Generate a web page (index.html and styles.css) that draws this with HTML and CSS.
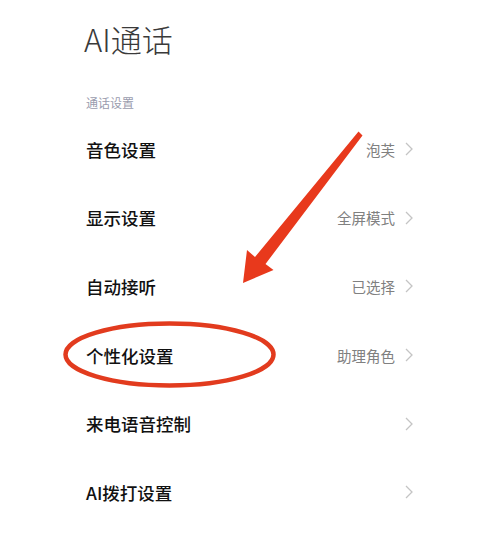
FILE: index.html
```html
<!DOCTYPE html>
<html lang="zh">
<head>
<meta charset="utf-8">
<link rel="stylesheet" href="styles.css">
</head>
<body>
<div class="page">
  <h1 class="title">AI通话</h1>
  <div class="section">通话设置</div>
  <ul class="list">
    <li class="row"><span class="label">音色设置</span><span class="value">泡芙</span><span class="chev"><svg width="8" height="14" viewBox="0 0 8 14"><path d="M1 1 L7 7 L1 13" fill="none" stroke="#c4c4c4" stroke-width="1.3"/></svg></span></li>
    <li class="row"><span class="label">显示设置</span><span class="value">全屏模式</span><span class="chev"><svg width="8" height="14" viewBox="0 0 8 14"><path d="M1 1 L7 7 L1 13" fill="none" stroke="#c4c4c4" stroke-width="1.3"/></svg></span></li>
    <li class="row"><span class="label">自动接听</span><span class="value">已选择</span><span class="chev"><svg width="8" height="14" viewBox="0 0 8 14"><path d="M1 1 L7 7 L1 13" fill="none" stroke="#c4c4c4" stroke-width="1.3"/></svg></span></li>
    <li class="row"><span class="label">个性化设置</span><span class="value">助理角色</span><span class="chev"><svg width="8" height="14" viewBox="0 0 8 14"><path d="M1 1 L7 7 L1 13" fill="none" stroke="#c4c4c4" stroke-width="1.3"/></svg></span></li>
    <li class="row"><span class="label">来电语音控制</span><span class="value"></span><span class="chev"><svg width="8" height="14" viewBox="0 0 8 14"><path d="M1 1 L7 7 L1 13" fill="none" stroke="#c4c4c4" stroke-width="1.3"/></svg></span></li>
    <li class="row"><span class="label">AI拨打设置</span><span class="value"></span><span class="chev"><svg width="8" height="14" viewBox="0 0 8 14"><path d="M1 1 L7 7 L1 13" fill="none" stroke="#c4c4c4" stroke-width="1.3"/></svg></span></li>
  </ul>
  <svg class="annot" width="500" height="533" viewBox="0 0 500 533">
    <polygon points="358.5,131.5 362.5,135.5 265.5,264 273.5,270 243,283 247,250 255,257" fill="#e8391c"/>
    <ellipse cx="169.5" cy="354.5" rx="104" ry="31" fill="none" stroke="#e23b1e" stroke-width="4.5"/>
  </svg>
</div>
</body>
</html>
```

FILE: styles.css
```css
html, body {
  margin: 0;
  padding: 0;
  background: #ffffff;
}
.page {
  position: relative;
  width: 500px;
  height: 533px;
  overflow: hidden;
  padding: 19px 87px 0 86px;
  box-sizing: border-box;
  font-family: "Noto Sans CJK SC", "Noto Sans", sans-serif;
}
.title {
  margin: 0 0 0 -2px;
  font-size: 31px;
  line-height: 40px;
  font-weight: 300;
  color: #3a3a3a;
}
.section {
  margin-top: 36px;
  font-size: 12px;
  line-height: 16px;
  color: #9a9cae;
}
.list {
  list-style: none;
  margin: 4px 0 0 0;
  padding: 0;
}
.row {
  display: flex;
  align-items: center;
  height: 68.6px;
}
.label {
  flex: 1;
  font-size: 17.5px;
  font-weight: 500;
  color: #111111;
}
.value {
  font-size: 14.5px;
  color: #808080;
  margin-right: 10px;
}
.chev {
  display: flex;
  align-items: center;
}
.annot {
  position: absolute;
  left: 0;
  top: 0;
}
```
